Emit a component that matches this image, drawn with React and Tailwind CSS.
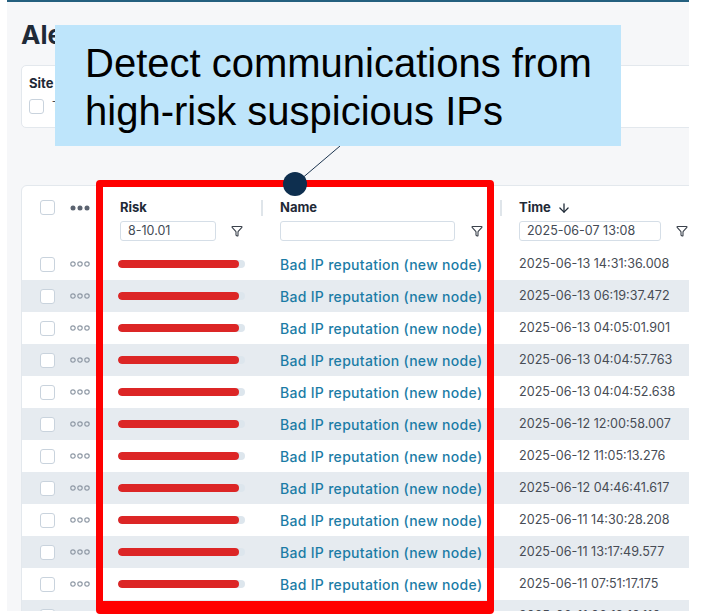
import { Filter, ArrowDown } from "lucide-react";

const times = [
  "2025-06-13 14:31:36.008",
  "2025-06-13 06:19:37.472",
  "2025-06-13 04:05:01.901",
  "2025-06-13 04:04:57.763",
  "2025-06-13 04:04:52.638",
  "2025-06-12 12:00:58.007",
  "2025-06-12 11:05:13.276",
  "2025-06-12 04:46:41.617",
  "2025-06-11 14:30:28.208",
  "2025-06-11 13:17:49.577",
  "2025-06-11 07:51:17.175",
  "2025-06-11 06:12:10.110",
];

function Checkbox({ className = "" }) {
  return (
    <div className={`w-[15px] h-[15px] rounded-[3px] border border-[#c9d3dd] bg-white ${className}`} />
  );
}

function RowDots() {
  return (
    <svg width="20" height="6" viewBox="0 0 20 6">
      <circle cx="3" cy="3" r="2.2" fill="none" stroke="#8f99a5" strokeWidth="1.2" />
      <circle cx="10" cy="3" r="2.2" fill="none" stroke="#8f99a5" strokeWidth="1.2" />
      <circle cx="17" cy="3" r="2.2" fill="none" stroke="#8f99a5" strokeWidth="1.2" />
    </svg>
  );
}

function HeadDots() {
  return (
    <svg width="20" height="6" viewBox="0 0 20 6">
      <circle cx="3" cy="3" r="2.5" fill="#5b6370" />
      <circle cx="10" cy="3" r="2.5" fill="#5b6370" />
      <circle cx="17" cy="3" r="2.5" fill="#5b6370" />
    </svg>
  );
}

const cols = "grid grid-cols-[40px_56px_162px_239px_1fr] items-center";

export default function App() {
  return (
    <div
      className="relative w-[706px] h-[615px] bg-white overflow-hidden"
      style={{ fontFamily: "Inter, 'Noto Sans', sans-serif" }}
    >
      <div className="ml-[7px] w-[682px] h-[611px] bg-[#f6f7f9] border-t-2 border-[#24607f] overflow-hidden pl-[14px]">
        <h1 className="mt-[18px] h-[30px] text-[26px] leading-[30px] font-bold text-[#1f2a37]">Alerts</h1>

        {/* filters card */}
        <div className="mt-[15px] w-[700px] h-[63px] bg-white border border-[#e3e8ed] rounded-[5px] px-[7px] pt-[9px]">
          <div className="text-[13px] font-bold text-[#1f2a37] leading-[16px]">Site</div>
          <div className="mt-[6px] flex items-center gap-2">
            <Checkbox className="w-[13px] h-[13px]" />
            <span className="text-[13px] text-[#444b55]">Test</span>
          </div>
        </div>

        {/* table card */}
        <div className="mt-[57px] w-[700px] bg-white border border-[#e3e8ed] rounded-t-[6px] text-[13.5px]">
          <div className="pt-[12px] pb-[7px]">
            <div className={`${cols} h-[15px]`}>
              <Checkbox className="ml-[18px]" />
              <div className="pl-[8px] flex items-center"><HeadDots /></div>
              <div className="flex items-center justify-between">
                <span className="pl-[2px] font-bold text-[13px] text-[#1f2a37]">Risk</span>
                <span className="w-[2px] h-[16px] bg-[#dfe5ea] mr-[17px]" />
              </div>
              <div className="flex items-center justify-between">
                <span className="font-bold text-[13px] text-[#1f2a37]">Name</span>
                <span className="w-[2px] h-[16px] bg-[#dfe5ea] mr-[17px]" />
              </div>
              <div className="flex items-center gap-[6px] font-bold text-[13px] text-[#1f2a37]">
                Time <ArrowDown size={14} strokeWidth={2.2} />
              </div>
            </div>
            <div className={`${cols} mt-[8px] h-[20px]`}>
              <div />
              <div />
              <div className="flex items-center">
                <div className="ml-[2px] w-[96px] h-[20px] border border-[#d5dee7] rounded-[3px] px-[7px] text-[12.5px] leading-[18px] text-[#444b55]">8-10.01</div>
                <Filter size={12} strokeWidth={2.2} className="ml-[15px] text-[#3a414b]" />
              </div>
              <div className="flex items-center">
                <div className="w-[175px] h-[20px] border border-[#d5dee7] rounded-[3px]" />
                <Filter size={12} strokeWidth={2.2} className="ml-[16px] text-[#3a414b]" />
              </div>
              <div className="flex items-center">
                <div className="w-[142px] h-[20px] border border-[#d5dee7] rounded-[3px] px-[7px] text-[12.5px] leading-[18px] text-[#444b55]">2025-06-07 13:08</div>
                <Filter size={12} strokeWidth={2.2} className="ml-[15px] text-[#3a414b]" />
              </div>
            </div>
          </div>

          {times.map((t, i) => (
            <div key={t} className={`${cols} h-[32px] ${i % 2 === 1 ? "bg-[#e6ebf0]" : "bg-white"}`}>
              <Checkbox className="ml-[18px]" />
              <div className="pl-[8px] flex items-center"><RowDots /></div>
              <div className="flex items-center">
                <div className="w-[127px] h-[8px] rounded-full bg-[#dde6ed] overflow-hidden">
                  <div className="w-[121px] h-[8px] rounded-full bg-[#dc2626]" />
                </div>
              </div>
              <div className="font-medium text-[14px] tracking-[0.3px] text-[#1b7ca6] whitespace-nowrap">Bad IP reputation (new node)</div>
              <div className="text-[12.6px] text-[#474c55] whitespace-nowrap">{t}</div>
            </div>
          ))}
        </div>
      </div>

      {/* annotation overlay */}
      <div className="absolute left-[96px] top-[180px] w-[398px] h-[434px] border-[7px] border-b-[13px] border-[#ff0000] rounded-[4px]" />
      <svg className="absolute left-0 top-0" width="706" height="615">
        <line x1="340" y1="146" x2="300" y2="180" stroke="#1c3550" strokeWidth="1" />
        <circle cx="295" cy="184" r="12" fill="#0e2f4f" />
      </svg>
      <div
        className="absolute left-[55px] top-[25px] w-[566px] h-[121px] bg-[#bee5fb] pl-[30px] pt-[14px] text-[40px] leading-[48px] text-black"
        style={{ fontFamily: "'Liberation Sans', Arial, sans-serif" }}
      >
        Detect communications from
        <br />
        high-risk suspicious IPs
      </div>
    </div>
  );
}
